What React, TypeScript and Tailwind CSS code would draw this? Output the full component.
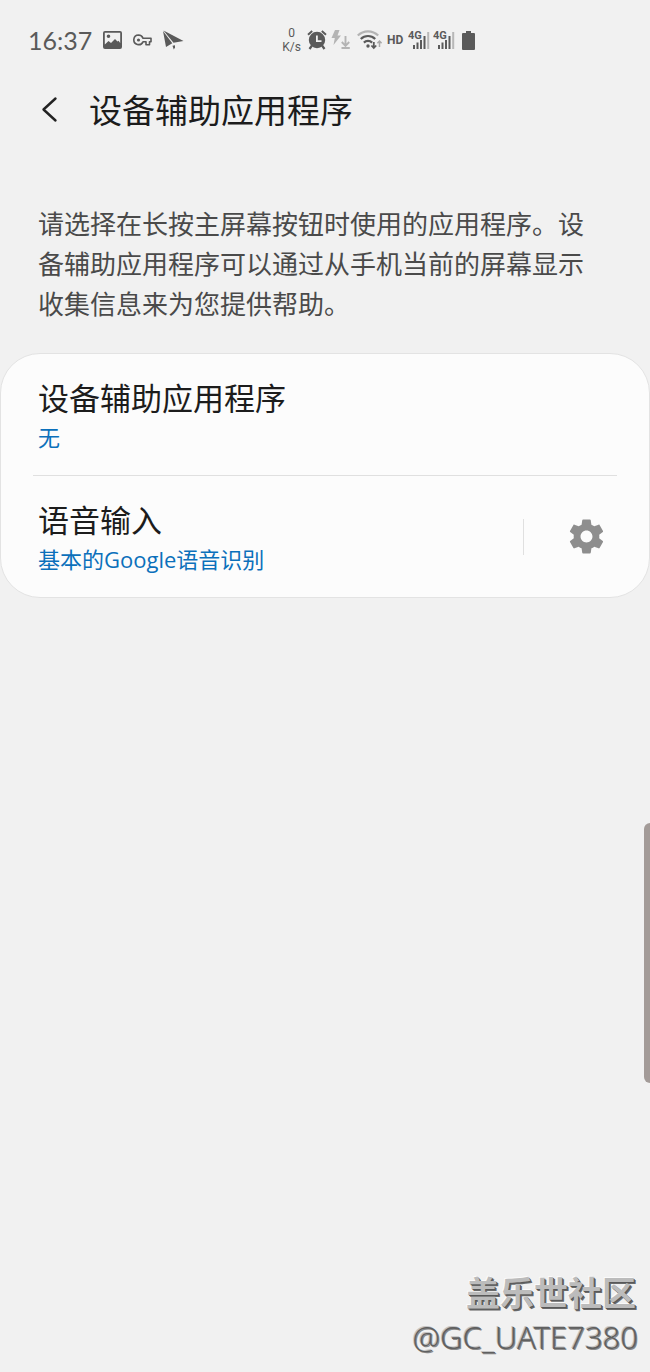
import type { ReactNode } from 'react';

export default function App() {
  return (
    <div className="relative flex min-h-screen flex-col overflow-hidden bg-[#f1f1f1] font-['Lato','Noto_Sans_CJK_SC',sans-serif] text-[#1c1c1c]">
      <StatusBar />

      <header className="flex h-15 items-center px-8">
        <button type="button" aria-label="返回" className="flex w-9 justify-center">
          <svg width="20" height="28" viewBox="0 0 20 28" fill="none" aria-hidden="true">
            <path
              d="M15.500 2.500 3.500 13.500 15.500 24.500"
              stroke="#222"
              strokeWidth="2.400"
              strokeLinecap="round"
              strokeLinejoin="round"
            />
          </svg>
        </button>
        <h1 className="ml-[21px] pb-px text-[33px] leading-12">设备辅助应用程序</h1>
      </header>

      <main>
        <p className="pt-16 pr-12 pb-[29px] pl-[38px] text-[26px] leading-10 text-[#4a4a4a]">
          请选择在长按主屏幕按钮时使用的应用程序。设备辅助应用程序可以通过从手机当前的屏幕显示收集信息来为您提供帮助。
        </p>

        <section className="rounded-[40px] border border-[#e3e3e3] bg-[#fcfcfc]">
          <SettingRow title="设备辅助应用程序" value="无" />
          <hr className="mx-8 border-[#e0e0e0]" />
          <div className="flex items-center">
            <SettingRow title="语音输入" value="基本的Google语音识别" />
            <div className="h-9 border-l border-[#e0e0e0]" />
            <button
              type="button"
              aria-label="设置"
              className="flex w-[125px] items-center justify-center"
            >
              <GearIcon />
            </button>
          </div>
        </section>
      </main>

      <div className="absolute top-[60%] right-0 h-[260px] w-[6px] rounded-l-[6px] bg-[#a39b98]" />

      <footer className="mt-auto flex flex-col items-end pr-3 pb-[13px]">
        <p className="pr-[2px] text-[34px] leading-11 font-bold text-[#bcbcbc] [text-shadow:1px_1px_0_#585858,2px_2px_0_#6a6a6a,-1px_-1px_0_#fafafa]">
          盖乐世社区
        </p>
        <p className="font-['Noto_Sans',sans-serif] text-[31px] leading-11 font-light text-[#606060] [text-shadow:-1px_-1px_0_#c4c4c4,1px_1px_0_#8a8a8a]">
          @GC_UATE7380
        </p>
      </footer>
    </div>
  );
}

function SettingRow({ title, value }: { title: string; value: string }) {
  return (
    <button type="button" className="block w-full flex-1 pt-[23px] pb-5 pl-[37px] text-left">
      <span className="block text-[31px] leading-[42px]">{title}</span>
      <span className="block font-['Open_Sans','Noto_Sans_CJK_SC',sans-serif] text-[22px] leading-9 text-[#0b70bb]">
        {value}
      </span>
    </button>
  );
}

function StatusBar() {
  return (
    <div className="flex h-20 items-center pl-7 text-[#5a5a5a]">
      <time className="w-[63px] text-[25px] leading-8">16:37</time>

      <div className="ml-3 flex items-center gap-[11px]">
        <Glyph width={19} height={18}>
          <path
            fillRule="evenodd"
            d="M2 0h15a2 2 0 0 1 2 2v14a2 2 0 0 1-2 2H2a2 2 0 0 1-2-2V2a2 2 0 0 1 2-2Zm-.2 1.800v11.700L5.500 10l2.500 2 4-4 2.500 2.500 1-.8 1.700 2.300V1.800ZM5.500 3.500a1.800 1.800 0 1 1 0 3.600 1.800 1.800 0 0 1 0-3.600Z"
          />
        </Glyph>
        <Glyph width={19} height={12}>
          <path
            d="M5.500 1a4.800 4.800 0 0 1 4.500 3.200H18v3.600h-1.500v3H13v-3h-3A4.800 4.800 0 1 1 5.500 1Z"
            fill="none"
            stroke="currentColor"
            strokeWidth="1.600"
            strokeLinejoin="round"
          />
          <circle cx="5.500" cy="6" r="1.600" />
        </Glyph>
        <Glyph width={21} height={20}>
          <path d="M.5.500 20.500 11 10.500 12.800ZM0 1l9.300 12.300L3 17Z" />
          <path d="m9.500 15.800 2.500-.6v2.300L10.800 19.500Z" />
        </Glyph>
      </div>

      <div className="ml-[98px] flex items-center">
        <div className="w-[19px] text-center font-['Roboto',sans-serif] text-[12px] leading-[14px]">
          <div>0</div>
          <div>K/s</div>
        </div>
        <Glyph width={20} height={20} className="ml-[6px]">
          <path d="M5.200 1 1 4.800M14.800 1 19 4.800" stroke="currentColor" strokeWidth="2" />
          <path
            fillRule="evenodd"
            d="M10 1.800a8.200 8.200 0 1 1 0 16.400 8.200 8.200 0 0 1 0-16.400ZM9 5.500V12h5.500v-1.800h-3.700V5.500Z"
          />
          <path d="m5 15.500-2.500 3.500M15 15.500l2.500 3.500" stroke="currentColor" strokeWidth="2.200" />
        </Glyph>
        <Glyph width={20} height={20} className="ml-[4px] text-[#b4b4b4]">
          <path d="M4 0h4.500L6.500 5.500H10L2.500 15l1.300-7H.5Z" />
          <path
            d="M14.500 6v9.500M10.800 12l3.700 3.800 3.700-3.800M10.500 18h8.300"
            fill="none"
            stroke="currentColor"
            strokeWidth="1.900"
          />
        </Glyph>
        <Glyph width={25} height={20} className="ml-[6px]">
          <path
            d="M.8 5.500a14.500 14.500 0 0 1 20.400 0"
            fill="none"
            stroke="#b4b4b4"
            strokeWidth="2.200"
          />
          <path
            d="M3.800 9a10.200 10.200 0 0 1 14.400 0M6.900 12.600a5.800 5.800 0 0 1 8.200 0"
            fill="none"
            stroke="currentColor"
            strokeWidth="2.200"
          />
          <circle cx="11" cy="16" r="1.700" />
          <path
            d="M16.800 12v6M14.400 15.500l2.400 2.500 2.400-2.500"
            fill="none"
            stroke="currentColor"
            strokeWidth="1.800"
          />
          <path
            d="M22.500 17v-6M20.400 13.200l2.100-2.200 2.100 2.200"
            fill="none"
            stroke="#aaa"
            strokeWidth="1.500"
          />
        </Glyph>
        <span className="ml-[5px] w-[18px] font-['Roboto',sans-serif] text-[12px] leading-4 font-bold">
          HD
        </span>
        <Signal />
        <Signal />
        <Glyph width={13} height={19} className="ml-[7px]">
          <path d="M4 0h5v2h3a1 1 0 0 1 1 1v15a1 1 0 0 1-1 1H1a1 1 0 0 1-1-1V3a1 1 0 0 1 1-1h3Z" />
        </Glyph>
      </div>
    </div>
  );
}

function Signal() {
  return (
    <svg
      width="22"
      height="20"
      viewBox="0 0 22 20"
      fill="currentColor"
      className="ml-[3px]"
      aria-hidden="true"
    >
      <text x="0" y="9" fontSize="11" fontWeight="700" fontFamily="Roboto, sans-serif">
        4G
      </text>
      <path d="M5 15h2v4H5zM8.500 12.500h2V19h-2zM12 10h2v9h-2zM15.500 6h2v13h-2z" />
      <path d="M19.200 2h2v17h-2z" fill="#b8b8b8" />
    </svg>
  );
}

function GearIcon() {
  return (
    <svg width="41" height="41" viewBox="0 0 24 24" fill="#8e8e8e" aria-hidden="true">
      <path d="M19.430 12.980c.04-.32.07-.64.07-.98s-.03-.66-.07-.98l2.110-1.650c.19-.15.24-.42.12-.64l-2-3.460c-.12-.22-.39-.3-.61-.22l-2.490 1c-.52-.4-1.080-.73-1.690-.98l-.38-2.650C14.460 2.180 14.250 2 14 2h-4c-.25 0-.46.18-.49.42l-.38 2.650c-.61.25-1.170.59-1.690.98l-2.490-1c-.23-.09-.49 0-.61.22l-2 3.460c-.13.22-.07.49.12.64l2.110 1.650c-.04.32-.07.65-.07.98s.03.66.07.98l-2.110 1.650c-.19.15-.24.42-.12.64l2 3.460c.12.22.39.3.61.22l2.490-1c.52.4 1.080.73 1.690.98l.38 2.650c.03.24.24.42.49.42h4c.25 0 .46-.18.49-.42l.38-2.650c.61-.25 1.170-.59 1.690-.98l2.490 1c.23.09.49 0 .61-.22l2-3.460c.12-.22.07-.49-.12-.64l-2.110-1.650zM12 15.500c-1.930 0-3.500-1.570-3.500-3.500s1.570-3.500 3.500-3.500 3.500 1.570 3.500 3.500-1.570 3.500-3.500 3.500z" />
    </svg>
  );
}

type GlyphProps = {
  width: number;
  height: number;
  className?: string;
  children: ReactNode;
};

function Glyph({ width, height, className, children }: GlyphProps) {
  return (
    <svg
      width={width}
      height={height}
      viewBox={`0 0 ${width} ${height}`}
      fill="currentColor"
      className={className}
      aria-hidden="true"
    >
      {children}
    </svg>
  );
}
